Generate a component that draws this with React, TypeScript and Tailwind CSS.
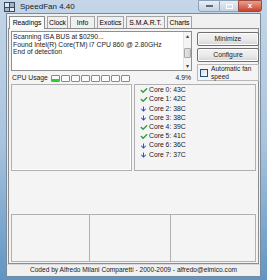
import { FaCheck, FaArrowDown } from "react-icons/fa";

const temps = [
  { name: "Core 0: 43C", ok: true },
  { name: "Core 1: 42C", ok: true },
  { name: "Core 2: 38C", ok: false },
  { name: "Core 3: 38C", ok: false },
  { name: "Core 4: 39C", ok: true },
  { name: "Core 5: 41C", ok: true },
  { name: "Core 6: 36C", ok: false },
  { name: "Core 7: 37C", ok: false },
];

const tabs = [
  { label: "Readings", w: "w-[36px]" },
  { label: "Clock", w: "w-[21px]" },
  { label: "Info", w: "w-[25px]" },
  { label: "Exotics", w: "w-[27px]" },
  { label: "S.M.A.R.T.", w: "w-[39px]" },
  { label: "Charts", w: "w-[25px]" },
];

function TitleBar() {
  return (
    <div className="h-[15px] flex items-start relative">
      <div className="ml-[4px] mt-[2px] w-[11px] h-[10px] bg-[#3a4a5a] grid grid-cols-2 gap-[1px] p-[1px]">
        <div className="bg-[#dfe8f0]" />
        <div className="bg-[#9fb4c8]" />
        <div className="bg-[#9fb4c8]" />
        <div className="bg-[#dfe8f0]" />
      </div>
      <span className="ml-[5px] mt-[2px] text-[8px] leading-[10px] text-[#1a1a1a]">SpeedFan 4.40</span>
      <div className="ml-auto mr-[5px] flex h-[12px]">
        <div className="w-[22px] h-full rounded-bl-[3px] border border-[#8aa0b8] bg-gradient-to-b from-[#e8eef6] to-[#c2d2e4] flex items-center justify-center">
          <div className="w-[7px] h-[2px] bg-white border-[0.5px] border-[#667]" />
        </div>
        <div className="w-[18px] h-full border-y border-[#8aa0b8] bg-gradient-to-b from-[#e8eef6] to-[#c2d2e4] flex items-center justify-center">
          <div className="w-[7px] h-[5px] border border-white" />
        </div>
        <div className="w-[24px] h-full rounded-br-[3px] border border-[#9a4a40] bg-gradient-to-b from-[#e8a090] to-[#c8402a] flex items-center justify-center text-white text-[8px] leading-none font-bold">
          x
        </div>
      </div>
    </div>
  );
}

function Tabs() {
  return (
    <div className="flex items-end h-[13px] pl-[1px] gap-[2px]">
      {tabs.map((t, i) => (
        <div
          key={t.label}
          className={
            i === 0
              ? `${t.w} h-[13px] border border-b-0 border-[#8c8c8c] bg-[#fafafa] text-[6.8px] leading-[12px] text-center relative top-[1px]`
              : `${t.w} h-[12px] border border-b-0 border-[#a4a4a4] bg-[#f0f0f0] text-[6.8px] leading-[11px] text-center`
          }
        >
          {t.label}
        </div>
      ))}
    </div>
  );
}

function TextBox() {
  return (
    <div className="w-[181px] h-[40px] border border-[#8f8f8f] bg-white flex">
      <div className="flex-1 pl-[1px] pt-[1px] text-[6.8px] leading-[7.6px] text-[#1a1a1a]">
        <div>Scanning ISA BUS at $0290...</div>
        <div>Found Intel(R) Core(TM) i7 CPU 860 @ 2.80GHz</div>
        <div>End of detection</div>
      </div>
      <div className="w-[8px] bg-[#f4f4f4] border-l border-[#e4e4e4] flex flex-col items-center">
        <div className="h-[8px] text-[6px] leading-[8px] text-[#404040]">▴</div>
        <div className="mt-[8px] w-[7px] h-[10px] bg-gradient-to-r from-[#e6e6e6] to-[#d2d2d2] border border-[#a8a8a8] rounded-[1px]" />
        <div className="mt-auto h-[8px] text-[6px] leading-[8px] text-[#404040]">▾</div>
      </div>
    </div>
  );
}

function Button({ label }: { label: string }) {
  return (
    <div className="w-[62px] h-[14px] border border-[#707070] rounded-[2px] bg-gradient-to-b from-[#f2f2f2] via-[#ebebeb] to-[#d6d6d6] flex items-center justify-center text-[6.8px] leading-none text-[#1a1a1a] shadow-[inset_0_0_0_1px_#fcfcfc]">
      {label}
    </div>
  );
}

export default function App() {
  return (
    <div
      className="w-[267px] h-[280px] overflow-hidden bg-gradient-to-b from-[#c4d6e8] via-[#aac4de] to-[#5f95c4] flex flex-col"
      style={{ fontFamily: '"Liberation Sans", Arial, sans-serif' }}
    >
      <TitleBar />
      <div className="flex-1 mx-[6px] mb-[3px] bg-[#f0f0f0] border border-[#7a8a9a] flex flex-col">
        <div className="px-[1px] pt-[1px]">
          <Tabs />
        </div>
        <div className="mx-[1px] h-[236px] border border-[#8c8c8c] bg-[#f4f4f4] px-[2px] pt-[2px] flex flex-col text-[#1a1a1a]">
          <div className="flex gap-[5px]">
            <div className="flex flex-col">
              <TextBox />
              <div className="flex items-center mt-[3px] h-[9px]">
                <span className="text-[6.8px] leading-none w-[40px] pl-[1px]">CPU Usage</span>
                <div className="flex gap-[1px]">
                  {Array.from({ length: 8 }).map((_, i) => (
                    <div key={i} className="w-[9px] h-[7px] border border-[#8a8a8a] rounded-[1px] bg-[#fafafa] flex items-end">
                      {i === 0 && <div className="w-full h-[2px] bg-[#33cc33]" />}
                    </div>
                  ))}
                </div>
                <span className="ml-auto text-[6.8px] leading-none pr-[1px]">4.9%</span>
              </div>
            </div>
            <div className="flex flex-col gap-[2px] pt-[1px]">
              <Button label="Minimize" />
              <Button label="Configure" />
              <div className="w-[62px] h-[17px] border border-[#b8b8b8] flex items-center">
                <div className="ml-[2px] w-[8px] h-[8px] border border-[#1c5180] bg-gradient-to-br from-[#dcdcdc] to-[#fbfbfb]" />
                <div className="ml-[3px] text-[6.6px] leading-[7.5px]">
                  Automatic fan
                  <br />
                  speed
                </div>
              </div>
            </div>
          </div>
          <div className="flex gap-[2px] mt-[1px]">
            <div className="w-[121px] h-[87px] border border-[#b0b0b0] shadow-[inset_-1px_-1px_0_#fff]" />
            <div className="w-[122px] h-[87px] border border-[#b0b0b0] pt-[1px] pl-[4px]">
              {temps.map((t) => (
                <div key={t.name} className="flex items-center h-[9.2px]">
                  <span className="w-[9px] flex justify-center">
                    {t.ok ? (
                      <FaCheck className="text-[#2e9e3e] w-[8px] h-[7px]" />
                    ) : (
                      <FaArrowDown className="text-[#1f3fd8] w-[5px] h-[8px]" />
                    )}
                  </span>
                  <span className="text-[6.8px] leading-none ml-[1px]">{t.name}</span>
                </div>
              ))}
            </div>
          </div>
          <div className="flex-1" />
          <div className="flex mb-[1px]">
            <div className="w-[80px] h-[48px] border border-[#b0b0b0]" />
            <div className="w-[81px] h-[48px] border border-l-0 border-[#b0b0b0]" />
            <div className="w-[86px] h-[48px] border border-l-0 border-[#b0b0b0]" />
          </div>
        </div>
        <div className="h-[12px] flex items-center justify-center text-[6.6px] leading-none text-[#1a1a1a] border-t border-[#d8d8d8]">
          Coded by Alfredo Milani Comparetti - 2000-2009 - alfredo@elmico.com
        </div>
      </div>
    </div>
  );
}
